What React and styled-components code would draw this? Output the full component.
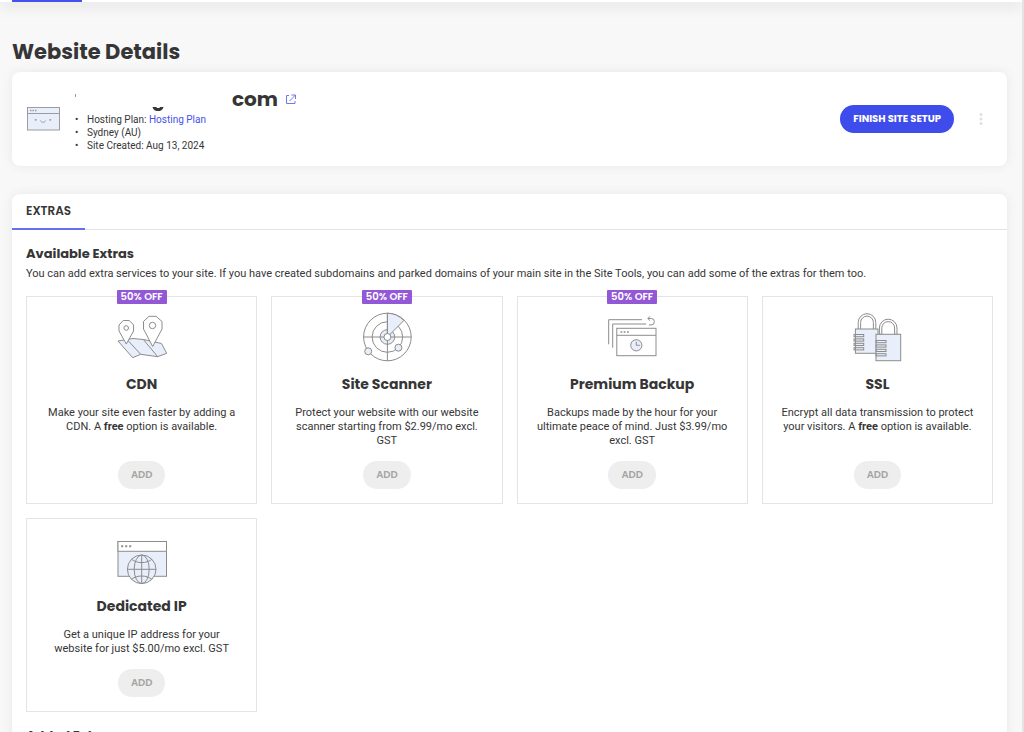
import React from "react";
import styled, { createGlobalStyle } from "styled-components";

const extras = [
  {
    id: "cdn",
    title: "CDN",
    badge: "50% OFF",
    icon: CdnIcon,
    text: (
      <>
        Make your site even faster by adding a CDN. A <b>free</b> option is
        available.
      </>
    ),
  },
  {
    id: "scanner",
    title: "Site Scanner",
    badge: "50% OFF",
    icon: ScannerIcon,
    text: "Protect your website with our website scanner starting from $2.99/mo excl. GST",
  },
  {
    id: "backup",
    title: "Premium Backup",
    badge: "50% OFF",
    icon: BackupIcon,
    text: "Backups made by the hour for your ultimate peace of mind. Just $3.99/mo excl. GST",
  },
  {
    id: "ssl",
    title: "SSL",
    icon: SslIcon,
    text: (
      <>
        Encrypt all data transmission to protect your visitors. A <b>free</b>{" "}
        option is available.
      </>
    ),
  },
  {
    id: "ip",
    title: "Dedicated IP",
    icon: IpIcon,
    text: "Get a unique IP address for your website for just $5.00/mo excl. GST",
  },
];

function App() {
  return (
    <Page>
      <GlobalStyle />
      <TopBar>
        <TopBarActive />
      </TopBar>
      <Main>
        <PageTitle>Website Details</PageTitle>

        <SiteCard>
          <SiteIcon />
          <SiteInfo>
            <SiteName>
              <HiddenName />
              com
              <ExternalLink href="#site" aria-label="Open site">
                <ExternalIcon />
              </ExternalLink>
            </SiteName>
            <MetaList>
              <li>
                Hosting Plan: <PlanLink href="#plan">Hosting Plan</PlanLink>
              </li>
              <li>Sydney (AU)</li>
              <li>Site Created: Aug 13, 2024</li>
            </MetaList>
          </SiteInfo>
          <PrimaryButton type="button">Finish site setup</PrimaryButton>
          <MenuButton type="button" aria-label="More options">
            <DotsIcon />
          </MenuButton>
        </SiteCard>

        <Panel>
          <Tabs>
            <Tab type="button">Extras</Tab>
          </Tabs>
          <PanelBody>
            <SectionTitle>Available Extras</SectionTitle>
            <SectionText>
              You can add extra services to your site. If you have created
              subdomains and parked domains of your main site in the Site Tools,
              you can add some of the extras for them too.
            </SectionText>
            <ExtrasGrid>
              {extras.map(({ id, title, badge, icon: Icon, text }) => (
                <ExtraCard key={id}>
                  {badge && <Badge>{badge}</Badge>}
                  <Icon />
                  <ExtraTitle>{title}</ExtraTitle>
                  <ExtraText>{text}</ExtraText>
                  <AddButton type="button">Add</AddButton>
                </ExtraCard>
              ))}
            </ExtrasGrid>
            <AddedTitle>Added Extras</AddedTitle>
          </PanelBody>
        </Panel>
      </Main>
    </Page>
  );
}

export default App;

function SiteIcon() {
  return (
    <svg width="34" height="26" viewBox="0 0 34 26" fill="none" stroke="#9a9ca2">
      <rect x="0.5" y="1.5" width="32" height="22.5" fill="#e8eefa" />
      <path d="M.5 7.5h32" />
      <path d="M3 4.500h1.500M5.500 4.500H7M8 4.500h1.500" strokeWidth="1.400" />
      <path d="M8.700 13v1.800M23.300 13v1.800" strokeWidth="1.600" />
      <path d="M13.500 14.500c.6 2.400 4.400 2.400 5 0" />
    </svg>
  );
}

// only the lowest edge of the masked domain name stays visible
function HiddenName() {
  return (
    <svg width="157" height="24" viewBox="0 0 157 24" fill="none">
      <path d="M0.5 7v3" stroke="#9a9a9a" />
      <path
        d="M77.500 20h11c-.8 3-3 4.200-5.500 4.200s-4.700-1.200-5.500-4.200z"
        fill="#363636"
      />
      <path d="M81 19.800h4.500c-.8 1.600-3.700 1.600-4.500 0z" fill="#fff" />
    </svg>
  );
}

function ExternalIcon() {
  return (
    <svg width="12" height="12" viewBox="0 0 12 12" fill="none" stroke="#6e79f0">
      <path d="M4 2.500H1.500v8h8.500V8" />
      <path d="M6.500 2h4v4M10.500 2L4.500 8" />
    </svg>
  );
}

function DotsIcon() {
  return (
    <svg width="4" height="12" viewBox="0 0 4 12" fill="#e0e0e0">
      <circle cx="2" cy="1.600" r="1.500" />
      <circle cx="2" cy="6" r="1.500" />
      <circle cx="2" cy="10.400" r="1.500" />
    </svg>
  );
}

function CdnIcon() {
  return (
    <Drawing>
      <path
        d="M1 29l15-2.500 10.500 1 18 4 5.200 9.800-9 3.400-17-2.400-8 3.400z"
        fill="#e8eefa"
      />
      <path d="M10 27.500l13.700 14.800M26.300 27.500l14.400 17.200" />
      <path
        d="M9.300 32L2 19V13l4.300-4.500h6L16.600 13v6z"
        fill="#fff"
      />
      <circle cx="9.200" cy="16" r="2.300" />
      <path
        d="M35.700 34.500L26.500 17V9.500L32 4.300h7L45 9.500V17z"
        fill="#fff"
      />
      <circle cx="35.500" cy="13.500" r="3.200" />
    </Drawing>
  );
}

function ScannerIcon() {
  return (
    <Drawing>
      <circle cx="25.400" cy="25" r="23.800" />
      <circle cx="25.400" cy="25" r="15.300" />
      <circle cx="25.400" cy="25" r="7.300" fill="#e8eefa" />
      <path d="M25.400 25V1.200a23.800 23.800 0 0 1 16.500 7.300z" fill="#e8eefa" />
      <path d="M25.400 1v48M1.400 25h48" />
      <circle cx="25.400" cy="25" r="3.500" fill="#fff" />
      <circle cx="6.200" cy="39.300" r="3.500" fill="#e8eefa" />
      <circle cx="36.400" cy="35.700" r="3.500" fill="#e8eefa" />
    </Drawing>
  );
}

function BackupIcon() {
  return (
    <Drawing>
      <path d="M1.700 32.300V7.700H35M5.700 35.700V12h33.500" />
      <rect x="9.800" y="16.300" width="39.200" height="27.400" fill="#fff" />
      <path d="M9.800 23.300H49" />
      <path d="M13.500 20H15.300M16.700 20h1.800M20 20h1.800" strokeWidth="1.600" />
      <circle cx="29.300" cy="33.300" r="5.600" fill="#e8eefa" />
      <path d="M29.300 29.800v3.500h3.500" />
      <path d="M41.200 6.500h3a3.200 3.200 0 0 1 0 6.400h-2.200M43 4.300l-2.200 2.200L43 8.700" />
    </Drawing>
  );
}

function SslIcon() {
  const bars = [0, 4.4, 8.8, 13.2];
  return (
    <Drawing>
      <path d="M6.200 17V10.500a8.800 8.800 0 0 1 17.600 0V17M8.600 17V10.500a6.400 6.400 0 0 1 12.800 0V17" />
      <rect x="3.400" y="17" width="22.600" height="24.300" fill="#e8eefa" />
      {bars.map((y) => (
        <rect key={y} x="2" y={22.5 + y} width="9.700" height="2.200" />
      ))}
      <path
        d="M27.400 22.300V16a8.800 8.800 0 0 1 17.600 0v6.300h-2.400V16a6.400 6.400 0 0 0-12.800 0v6.300z"
        fill="#fff"
      />
      <rect x="24" y="22.300" width="24.700" height="26.400" fill="#e8eefa" />
      {bars.map((y) => (
        <rect key={y} x="24" y={28.5 + y} width="10" height="2.200" />
      ))}
    </Drawing>
  );
}

function IpIcon() {
  return (
    <Drawing>
      <rect x="1" y="7.500" width="48.500" height="34.800" fill="#e8eefa" />
      <rect x="1" y="7.500" width="48.500" height="9.800" fill="#fff" />
      <path d="M4.200 12.200h2M8.200 12.200h2M12.200 12.200h2" strokeWidth="2" />
      <circle cx="24.700" cy="35.300" r="14.300" fill="#e8eefa" />
      <ellipse cx="24.700" cy="35.300" rx="7.500" ry="14.300" />
      <path d="M24.700 21v28.600M10.400 35.300H39M14.500 25.300c5.500 4.400 14.900 4.400 20.400 0M14.500 45.300c5.500-4.400 14.900-4.400 20.400 0" />
    </Drawing>
  );
}

const GlobalStyle = createGlobalStyle`
  * {
    box-sizing: border-box;
  }

  body {
    margin: 0;
    font-family: Roboto, sans-serif;
    font-size: 11px;
    color: #363636;
    background: #f8f8f8;
  }

  h1, h2, h3, p, ul {
    margin: 0;
    padding: 0;
  }

  button {
    border: 0;
    padding: 0;
    cursor: pointer;
  }

  svg {
    display: block;
    flex-shrink: 0;
  }
`;

const headingFont = `Poppins, Inter, sans-serif`;

const Page = styled.div`
  height: 100vh;
  overflow: hidden;
  background: #f8f8f8;
  border-right: 2px solid #e4e4e4;
`;

const TopBar = styled.header`
  height: 2px;
  padding: 0 12px;
  background: #fff;
  box-shadow: 0 2px 14px rgba(0, 0, 0, 0.36);
`;

const TopBarActive = styled.div`
  width: 70px;
  height: 2px;
  background: #4451ec;
`;

const Main = styled.main`
  padding: 34px 15px 0 12px;
`;

const PageTitle = styled.h1`
  font-family: ${headingFont};
  font-size: 21px;
  font-weight: 700;
  line-height: 32px;
`;

const Surface = styled.section`
  background: #fff;
  border-radius: 8px;
  box-shadow: 0 0 12px rgba(0, 0, 0, 0.07);
`;

const SiteCard = styled(Surface)`
  display: flex;
  align-items: center;
  height: 94px;
  margin-top: 4px;
  padding: 0 24px 0 15px;
`;

const SiteInfo = styled.div`
  flex: 1;
  margin-left: 14px;
`;

const SiteName = styled.h2`
  display: flex;
  align-items: center;
  height: 24px;
  font-family: ${headingFont};
  font-size: 20px;
  font-weight: 700;
  line-height: 24px;
`;

const ExternalLink = styled.a`
  margin-left: 7px;
`;

const MetaList = styled.ul`
  margin-top: 2px;
  padding-left: 12px;
  font-size: 10px;
  line-height: 13px;
  list-style: none;

  li::before {
    content: "•";
    display: inline-block;
    width: 12px;
    margin-left: -12px;
  }
`;

const PlanLink = styled.a`
  color: #4451ec;
  text-decoration: none;
`;

const PrimaryButton = styled.button`
  height: 28px;
  padding: 0 13px;
  border-radius: 14px;
  background: #3e4ceb;
  color: #fff;
  font-family: ${headingFont};
  font-size: 10px;
  font-weight: 700;
  text-transform: uppercase;
`;

const MenuButton = styled.button`
  margin-left: 25px;
  background: none;
`;

const Panel = styled(Surface)`
  margin-top: 28px;
`;

const Tabs = styled.nav`
  display: flex;
  height: 36px;
  border-bottom: 1px solid #e4e4e4;
`;

const Tab = styled.button`
  height: 36px;
  padding: 0 14px;
  border-bottom: 2px solid #6570f0;
  background: none;
  color: #363636;
  font-family: ${headingFont};
  font-size: 12px;
  font-weight: 600;
  text-transform: uppercase;
`;

const PanelBody = styled.div`
  padding: 16px 14px;
`;

const SectionTitle = styled.h2`
  font-family: ${headingFont};
  font-size: 13px;
  font-weight: 700;
  line-height: 16px;
`;

const SectionText = styled.p`
  margin-top: 4px;
  line-height: 16px;
`;

const ExtrasGrid = styled.div`
  display: grid;
  grid-template-columns: repeat(4, 1fr);
  gap: 14px;
  margin-top: 14px;
`;

const ExtraCard = styled.article`
  position: relative;
  display: flex;
  flex-direction: column;
  align-items: center;
  padding: 15px 18px 14px;
  border: 1px solid #e4e4e4;
  text-align: center;
`;

const Badge = styled.span`
  position: absolute;
  top: -7px;
  left: 50%;
  transform: translateX(-50%);
  padding: 0 4px;
  border-radius: 1px;
  background: #9258d6;
  color: #fff;
  font-family: ${headingFont};
  font-size: 10px;
  font-weight: 600;
  line-height: 14px;
  white-space: nowrap;
`;

const Drawing = styled.svg.attrs({
  width: 50,
  height: 50,
  viewBox: "0 0 50 50",
  fill: "none",
  stroke: "#8c8c8c",
})``;

const ExtraTitle = styled.h3`
  margin-top: 14px;
  font-family: ${headingFont};
  font-size: 14px;
  font-weight: 700;
  line-height: 16px;
`;

const ExtraText = styled.p`
  margin: 14px 0 13px;
  line-height: 14px;
`;

const AddButton = styled.button`
  height: 28px;
  margin-top: auto;
  padding: 0 13px;
  border-radius: 14px;
  background: #eee;
  color: #a4a4a4;
  font-family: ${headingFont};
  font-size: 10px;
  font-weight: 600;
  text-transform: uppercase;
`;

const AddedTitle = styled(SectionTitle)`
  margin-top: 16px;
`;
